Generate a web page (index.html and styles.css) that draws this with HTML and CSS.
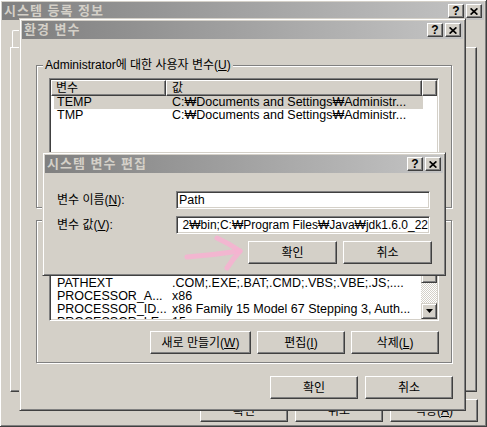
FILE: index.html
```html
<!DOCTYPE html>
<html lang="ko">
<head>
<meta charset="utf-8">
<title>환경 변수</title>
<link rel="stylesheet" href="styles.css">
</head>
<body>
<div class="win outer">
  <div class="title"><span class="t">시스템 등록 정보</span>
    <div class="cbtns"><span class="cbtn">?</span><span class="cbtn"><svg class="xi" viewBox="0 0 8 7" width="8" height="7"><path d="M0.6 0.4 L7.4 6.6 M7.4 0.4 L0.6 6.6"/></svg></span></div>
  </div>
  <div class="outer-body">
    <div class="tabs"><div class="tab"></div></div>
    <div class="tabpage"></div>
    <div class="btnrow outer-btns"><div class="btn">확인</div><div class="btn">취소</div><div class="btn">적용(<u>A</u>)</div></div>
  </div>
</div>

<div class="win env">
  <div class="title"><span class="t">환경 변수</span>
    <div class="cbtns"><span class="cbtn">?</span><span class="cbtn"><svg class="xi" viewBox="0 0 8 7" width="8" height="7"><path d="M0.6 0.4 L7.4 6.6 M7.4 0.4 L0.6 6.6"/></svg></span></div>
  </div>
  <div class="env-body">
    <div class="group g1">
      <span class="legend">Administrator에 대한 사용자 변수(<u>U</u>)</span>
      <div class="list">
        <div class="lv">
          <div class="hdr"><span class="hc h1">변수</span><span class="hc h2">값</span><span class="hc hf"></span></div>
          <div class="row sel"><span class="c1">TEMP</span><span class="c2">C:₩Documents and Settings₩Administr...</span></div>
          <div class="row"><span class="c1">TMP</span><span class="c2">C:₩Documents and Settings₩Administr...</span></div>
        </div>
      </div>
      <div class="btnrow gbtns"><div class="btn wide"></div><div class="btn"></div><div class="btn"></div></div>
    </div>

    <div class="group g2">
      <div class="list split">
        <div class="lv">
          <div class="hdr"><span class="hc h1"></span><span class="hc h2"></span><span class="hc hf"></span></div>
          <div class="rows scrolled">
            <div class="row"><span class="c1">PATHEXT</span><span class="c2">.COM;.EXE;.BAT;.CMD;.VBS;.VBE;.JS;....</span></div>
            <div class="row"><span class="c1">PROCESSOR_A...</span><span class="c2">x86</span></div>
            <div class="row"><span class="c1">PROCESSOR_ID...</span><span class="c2">x86 Family 15 Model 67 Stepping 3, Auth...</span></div>
            <div class="row"><span class="c1">PROCESSOR_LE...</span><span class="c2">15</span></div>
          </div>
        </div>
        <div class="vscroll">
          <div class="sb-btn"><svg viewBox="0 0 7 4" width="7" height="4"><path d="M3.5 0 L7 4 L0 4Z"/></svg></div>
          <div class="sb-thumb"></div>
          <div class="sb-track"></div>
          <div class="sb-btn"><svg viewBox="0 0 7 4" width="7" height="4"><path d="M0 0 L7 0 L3.5 4Z"/></svg></div>
        </div>
      </div>
      <div class="btnrow gbtns"><div class="btn wide">새로 만들기(<u>W</u>)</div><div class="btn">편집(<u>I</u>)</div><div class="btn">삭제(<u>L</u>)</div></div>
    </div>

    <div class="btnrow env-btns"><div class="btn">확인</div><div class="btn">취소</div></div>
  </div>
</div>

<div class="win edit">
  <div class="title"><span class="t">시스템 변수 편집</span>
    <div class="cbtns"><span class="cbtn">?</span><span class="cbtn"><svg class="xi" viewBox="0 0 8 7" width="8" height="7"><path d="M0.6 0.4 L7.4 6.6 M7.4 0.4 L0.6 6.6"/></svg></span></div>
  </div>
  <div class="edit-body">
    <div class="frow"><span class="lbl">변수 이름(<u>N</u>):</span><div class="field">Path</div></div>
    <div class="frow"><span class="lbl">변수 값(<u>V</u>):</span><div class="field end"><span>2₩bin;C:₩Program Files₩Java₩jdk1.6.0_22</span></div></div>
    <div class="btnrow edit-btns"><div class="btn">확인</div><div class="btn">취소</div></div>
  </div>
</div>

<svg class="arrow" viewBox="0 0 70 42" width="70" height="42">
  <path d="M7 25 Q 33 23 60 19"/>
  <path d="M37 6 Q 50 12 60 19 Q 53 27 47 36"/>
</svg>
</body>
</html>
```

FILE: styles.css
```css
* { box-sizing: border-box; }
html, body { margin: 0; padding: 0; }
body {
  width: 487px;
  height: 427px;
  overflow: hidden;
  position: relative;
  background: #d4d0c8;
  color: #000;
  font-family: "Liberation Sans", "Noto Sans", "Noto Sans CJK KR", sans-serif;
  font-size: 12px;
}
u { text-decoration: underline; text-underline-offset: 1px; }

/* window frame */
.win {
  position: absolute;
  display: flex;
  flex-direction: column;
  background: #d4d0c8;
  border: 1px solid;
  border-color: #d4d0c8 #404040 #404040 #d4d0c8;
  box-shadow: inset 1px 1px #fff, inset -1px -1px #808080;
  padding: 2px;
}
.outer { left: -1px; top: -1px; width: 488px; height: 428px; }
.env { left: 19px; top: 18px; width: 447px; height: 393px; }
.edit { left: 42px; top: 152px; width: 404px; height: 124px; }

.title {
  flex: none;
  height: 18px;
  display: flex;
  align-items: center;
  padding: 0 2px;
  background: linear-gradient(to right, #808080, #c4c4c4);
  color: #d4d0c8;
  font-family: "Liberation Sans", "Noto Sans CJK KR", sans-serif;
  font-weight: bold;
  font-size: 13px;
  letter-spacing: 1px;
}
.title .t { flex: 1; white-space: nowrap; line-height: 18px; }
.cbtns { display: flex; gap: 2px; }
.cbtn {
  width: 16px;
  height: 14px;
  display: flex;
  align-items: center;
  justify-content: center;
  background: #d4d0c8;
  border: 1px solid;
  border-color: #fff #404040 #404040 #fff;
  box-shadow: inset -1px -1px #808080;
  color: #000;
  font: bold 12px/12px "Liberation Sans", sans-serif;
  letter-spacing: 0;
}
.xi path { stroke: #000; stroke-width: 1.7; fill: none; }

/* buttons */
.btnrow { display: flex; justify-content: flex-end; }
.btn {
  width: 88px;
  height: 23px;
  display: flex;
  align-items: center;
  justify-content: center;
  background: #d4d0c8;
  border: 1px solid;
  border-color: #fff #404040 #404040 #fff;
  box-shadow: inset -1px -1px #808080;
  white-space: nowrap;
  line-height: 16px;
}

/* outer property sheet */
.outer-body {
  flex: 1;
  display: flex;
  flex-direction: column;
  padding: 10px 6px 0 8px;
}
.tabs { height: 17px; display: flex; padding-left: 2px; }
.tab {
  width: 82px;
  height: 17px;
  border-top: 1px solid #fff;
  border-left: 1px solid #fff;
  border-right: 1px solid #404040;
  border-top-left-radius: 2px;
  box-shadow: inset -1px 0 #808080;
}
.tabpage {
  height: 345px;
  margin-right: 1px;
  border: 1px solid;
  border-color: #fff #404040 #404040 #fff;
  box-shadow: inset -1px -1px #808080;
}
.outer-btns { margin-top: 7px; gap: 7px; }

/* environment variables dialog */
.env-body {
  flex: 1;
  display: flex;
  flex-direction: column;
  padding: 26px 10px 0 14px;
}
.group {
  position: relative;
  margin-right: 1px;
  border: 1px solid #808080;
  box-shadow: inset 1px 1px #fff, 1px 1px #fff;
  padding: 12px 12px 8px 12px;
}
.g2 { margin-top: 12px; }
.legend {
  position: absolute;
  top: -8px;
  left: 6px;
  padding: 0 2px;
  background: #d4d0c8;
  line-height: 15px;
  white-space: nowrap;
}
.list {
  height: 88px;
  background: #fff;
  border: 1px solid;
  border-color: #808080 #fff #fff #808080;
  box-shadow: inset 1px 1px #404040, inset -1px -1px #d4d0c8;
  padding: 1px;
  overflow: hidden;
}
.list.split { display: flex; }
.lv { flex: 1; min-width: 0; overflow: hidden; }
.hdr { display: flex; height: 16px; }
.hc {
  height: 16px;
  background: #d4d0c8;
  border: 1px solid;
  border-color: #fff #404040 #404040 #fff;
  box-shadow: inset -1px -1px #808080;
  line-height: 14px;
  padding-left: 4px;
  white-space: nowrap;
}
.h1 { width: 115px; }
.h2 { width: 256px; padding-left: 5px; }
.hf { flex: 1; }
.row {
  display: flex;
  height: 13px;
  line-height: 13px;
  margin-left: 3px;
  width: 369px;
  white-space: nowrap;
  font-size: 12.5px;
}
.row.sel { background: #d4d0c8; }
.c1 { width: 112px; flex: none; padding-left: 3px; }
.c2 { flex: 1; padding-left: 6px; }
.rows.scrolled { padding-top: 26px; }

.vscroll { width: 16px; flex: none; display: flex; flex-direction: column; }
.sb-btn, .sb-thumb {
  background: #d4d0c8;
  border: 1px solid;
  border-color: #d4d0c8 #404040 #404040 #d4d0c8;
  box-shadow: inset 1px 1px #fff, inset -1px -1px #808080;
}
.sb-btn { height: 16px; display: flex; align-items: center; justify-content: center; }
.sb-btn path { fill: #000; }
.sb-thumb { height: 32px; }
.sb-track {
  flex: 1;
  background: repeating-conic-gradient(#fff 0 25%, #d4d0c8 0 50%) 0 0 / 2px 2px;
}
.gbtns { margin-top: 10px; gap: 6px; }
.btn.wide { width: 101px; }
.env-btns { margin-top: 13px; gap: 7px; }

/* edit dialog */
.edit-body {
  flex: 1;
  display: flex;
  flex-direction: column;
  padding: 18px 11px 0 12px;
}
.frow { display: flex; align-items: center; height: 18px; margin-bottom: 7px; }
.frow + .frow { margin-bottom: 0; }
.lbl { width: 119px; white-space: nowrap; line-height: 16px; }
.field {
  width: 254px;
  height: 18px;
  display: flex;
  background: #fff;
  border: 1px solid;
  border-color: #808080 #fff #fff #808080;
  box-shadow: inset 1px 1px #404040, inset -1px -1px #d4d0c8;
  padding: 0 1px 0 2px;
  line-height: 16px;
  white-space: nowrap;
  overflow: hidden;
  font-size: 12.5px;
}
.field.end { justify-content: flex-end; padding-left: 1px; font-size: 12px; }
.field.end span { flex: none; }
.edit-btns { margin-top: 7px; gap: 6px; }
.edit-btns .btn { width: 89px; }

/* pink annotation arrow */
.arrow {
  position: absolute;
  left: 180px;
  top: 232px;
  width: 70px;
  height: 42px;
  pointer-events: none;
}
.arrow path {
  fill: none;
  stroke: #f5b2d0;
  stroke-width: 5;
  stroke-linecap: round;
  stroke-linejoin: round;
  opacity: 0.9;
}
```
